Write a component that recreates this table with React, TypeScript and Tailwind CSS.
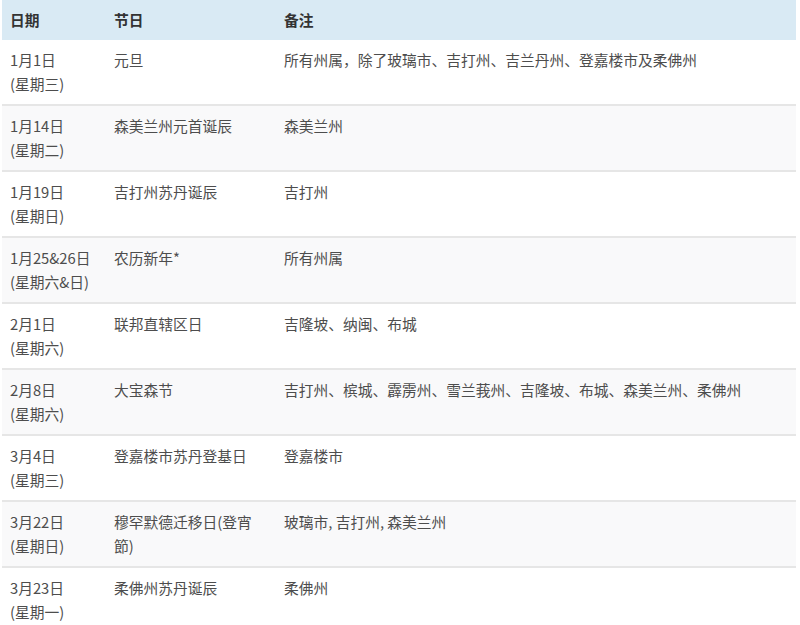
import React from "react";

type Row = { date: string; week: string; name: string; note: string };

const rows: Row[] = [
  { date: "1月1日", week: "(星期三)", name: "元旦", note: "所有州属，除了玻璃市、吉打州、吉兰丹州、登嘉楼市及柔佛州" },
  { date: "1月14日", week: "(星期二)", name: "森美兰州元首诞辰", note: "森美兰州" },
  { date: "1月19日", week: "(星期日)", name: "吉打州苏丹诞辰", note: "吉打州" },
  { date: "1月25&26日", week: "(星期六&日)", name: "农历新年*", note: "所有州属" },
  { date: "2月1日", week: "(星期六)", name: "联邦直辖区日", note: "吉隆坡、纳闽、布城" },
  { date: "2月8日", week: "(星期六)", name: "大宝森节", note: "吉打州、槟城、霹雳州、雪兰莪州、吉隆坡、布城、森美兰州、柔佛州" },
  { date: "3月4日", week: "(星期三)", name: "登嘉楼市苏丹登基日", note: "登嘉楼市" },
  { date: "3月22日", week: "(星期日)", name: "穆罕默德迁移日(登宵節)", note: "玻璃市, 吉打州, 森美兰州" },
  { date: "3月23日", week: "(星期一)", name: "柔佛州苏丹诞辰", note: "柔佛州" },
];

export default function App() {
  return (
    <div
      className="w-[800px] h-[625px] overflow-hidden bg-white pl-[2px] pr-[4px]"
      style={{ fontFamily: '"Noto Sans CJK SC", "Noto Sans", sans-serif' }}
    >
      <table className="w-[794px] table-fixed border-collapse text-[14.75px] leading-[24px] text-[#4d4d4d]">
        <colgroup>
          <col className="w-[104px]" />
          <col className="w-[170px]" />
          <col />
        </colgroup>
        <thead>
          <tr className="bg-[#d9eaf4] text-[#333] font-bold">
            <th className="text-left font-bold px-2 py-2 h-[40px]">日期</th>
            <th className="text-left font-bold px-2 py-2">节日</th>
            <th className="text-left font-bold px-2 py-2">备注</th>
          </tr>
        </thead>
        <tbody>
          {rows.map((r, i) => (
            <tr
              key={i}
              className={
                (i % 2 === 1 ? "bg-[#f9f9fa] " : "bg-white ") +
                "border-b-2 border-[#e6e6e6] align-top"
              }
            >
              <td className="px-2 py-2 h-[64px] whitespace-nowrap">
                <div>{r.date}</div>
                <div>{r.week}</div>
              </td>
              <td className="px-2 py-2">{r.name}</td>
              <td className="px-2 py-2">{r.note}</td>
            </tr>
          ))}
        </tbody>
      </table>
    </div>
  );
}
